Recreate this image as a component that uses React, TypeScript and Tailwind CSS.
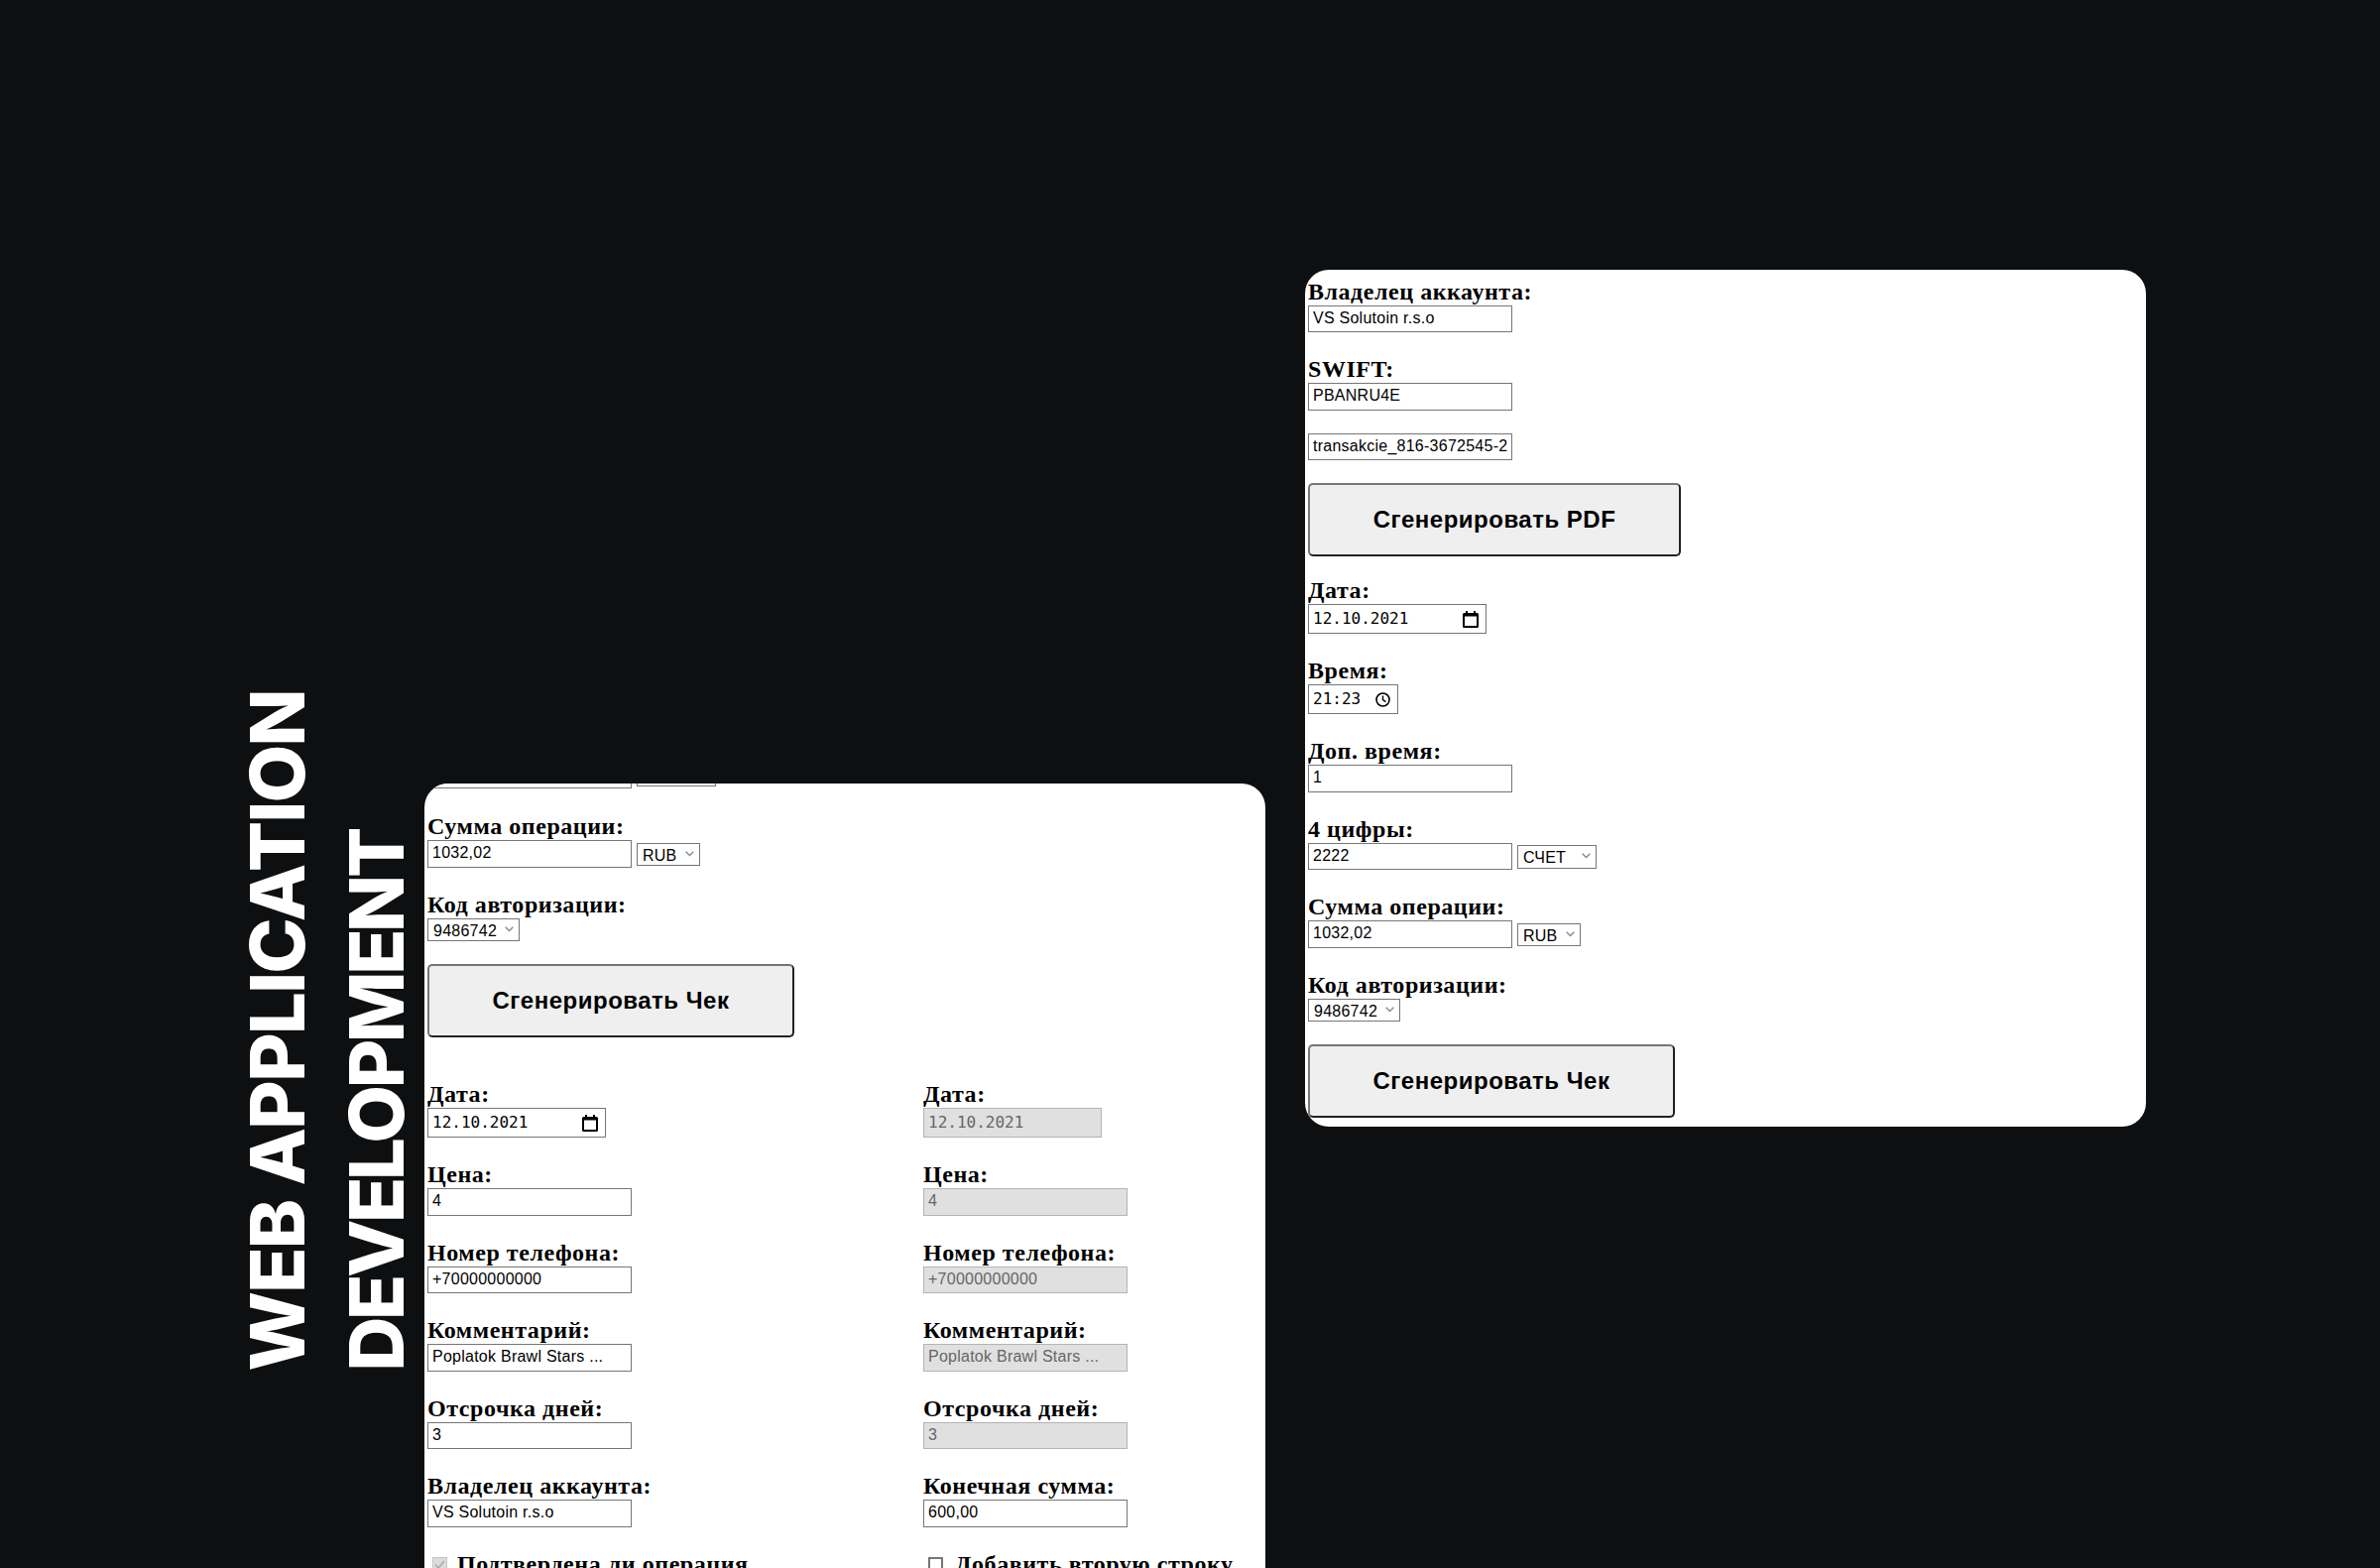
const sans = "font-['Liberation_Sans',sans-serif]";

type FieldProps = {
    label?: string;
    value: string;
    box?: string;
    disabled?: boolean;
    after?: React.ReactNode;
};

function Label({ children }: { children: React.ReactNode }) {
    return <div className="h-[27px] text-[24px] leading-[27px] font-bold tracking-[0.55px] text-black whitespace-nowrap">{children}</div>;
}

function TextBox({ value, box = "h-[27px]", disabled }: { value: string; box?: string; disabled?: boolean }) {
    return (
        <input
            readOnly
            value={value}
            className={`${box} w-[206px] border px-[4px] pb-[2px] text-[16px] tracking-[0.25px] outline-none ${sans} ${
                disabled ? "border-[#b4b4b4] bg-[#e0e0e0] text-[#666]" : "border-[#767676] bg-white text-black"
            }`}
        />
    );
}

function Dropdown({ value, box }: { value: string; box: string }) {
    return (
        <span className={`${box} relative block`}>
            <select
                defaultValue={value}
                className={`size-full appearance-none border border-[#767676] bg-white pb-[3px] pl-[5px] text-[16px] tracking-[0.25px] text-black ${sans}`}
            >
                <option>{value}</option>
            </select>
            <svg width="9" height="6" viewBox="0 0 9 6" className="absolute right-[6px] top-[8px]">
                <path d="M0.7 0.8l3.8 3.8 3.8-3.8" fill="none" stroke="#8a8a8a" strokeWidth="1.4" />
            </svg>
        </span>
    );
}

function CalendarIcon() {
    return (
        <svg width="16" height="17" viewBox="0 0 16 17" className="shrink-0">
            <path
                fillRule="evenodd"
                d="M3 0h2v2h6V0h2v2h1.5A1.5 1.5 0 0 1 16 3.5v12a1.5 1.5 0 0 1-1.5 1.5h-13A1.5 1.5 0 0 1 0 15.5v-12A1.5 1.5 0 0 1 1.5 2H3zM2 5.5V15h12V5.5z"
                fill="#000"
            />
        </svg>
    );
}

function ClockIcon() {
    return (
        <svg width="15" height="15" viewBox="0 0 15 15" className="shrink-0">
            <circle cx="7.5" cy="7.5" r="6.5" fill="none" stroke="#000" strokeWidth="1.6" />
            <path d="M7.5 3.6v4.1l3 1.9" fill="none" stroke="#000" strokeWidth="1.4" />
        </svg>
    );
}

function DateBox({ value, box, disabled, icon }: { value: string; box: string; disabled?: boolean; icon?: React.ReactNode }) {
    return (
        <div
            className={`${box} flex items-center justify-between border pl-[4px] pr-[7px] text-[16px] font-['DejaVu_Sans_Mono',monospace] ${
                disabled ? "border-[#b4b4b4] bg-[#e0e0e0] text-[#666]" : "border-[#767676] bg-white text-black"
            }`}
        >
            <span>{value}</span>
            {icon}
        </div>
    );
}

function GenButton({ text, box }: { text: string; box: string }) {
    return (
        <button
            type="button"
            className={`${box} h-[74px] rounded-[5px] border-2 border-[#767676] border-r-[#222] border-b-[#222] bg-[#efefef] text-[24px] font-bold tracking-[0.5px] text-black ${sans}`}
        >
            {text}
        </button>
    );
}

function Field({ label, value, box, disabled, after }: FieldProps) {
    return (
        <div className="mb-[24px]">
            {label && <Label>{label}</Label>}
            <div className="flex items-center gap-[5px]">
                <TextBox value={value} box={box} disabled={disabled} />
                {after}
            </div>
        </div>
    );
}

function CheckRow({ text, checked, disabled }: { text: string; checked?: boolean; disabled?: boolean }) {
    return (
        <div className="flex items-center pl-[5px]">
            <span
                className={`flex size-[15px] shrink-0 items-center justify-center ${
                    disabled ? "mr-[10px] border border-[#c4c4c4] bg-[#dcdcdc]" : "mr-[12px] border-2 border-[#767676] bg-white"
                }`}
            >
                {checked && (
                    <svg width="13" height="13" viewBox="0 0 13 13">
                        <path d="M2 6.5l3 3.5 6-7" fill="none" stroke="#aaa" strokeWidth="1.6" />
                    </svg>
                )}
            </span>
            <Label>{text}</Label>
        </div>
    );
}

function LeftCard() {
    return (
        <div className="mt-[790px] h-[791px] w-[848px] shrink-0 overflow-hidden rounded-t-[24px] bg-white pl-[3px]">
            <div className="-mt-[22px] mb-[25px] flex items-start gap-[5px]">
                <TextBox value="2222" />
                <div className="mt-px">
                    <Dropdown value="СЧЕТ" box="h-[24px] w-[80px]" />
                </div>
            </div>
            <Field label="Сумма операции:" value="1032,02" box="h-[28px]" after={<Dropdown value="RUB" box="h-[23px] w-[64px]" />} />
            <Label>Код авторизации:</Label>
            <Dropdown value="9486742" box="h-[23px] w-[93px]" />
            <GenButton text="Сгенерировать Чек" box="mt-[23px] block w-[370px]" />

            <div className="mt-[44px] flex">
                <div className="w-[500px] shrink-0">
                    <Label>Дата:</Label>
                    <DateBox value="12.10.2021" box="mb-[24px] h-[30px] w-[180px]" icon={<CalendarIcon />} />
                    <Field label="Цена:" value="4" box="h-[28px]" />
                    <Field label="Номер телефона:" value="+70000000000" />
                    <Field label="Комментарий:" value="Poplatok Brawl Stars ..." box="h-[28px]" />
                    <Field label="Отсрочка дней:" value="3" />
                    <Field label="Владелец аккаунта:" value="VS Solutoin r.s.o" box="h-[28px]" />
                    <CheckRow text="Подтвердена ли операция" checked disabled />
                </div>
                <div>
                    <Label>Дата:</Label>
                    <DateBox value="12.10.2021" box="mb-[24px] h-[30px] w-[180px]" disabled />
                    <Field label="Цена:" value="4" box="h-[28px]" disabled />
                    <Field label="Номер телефона:" value="+70000000000" disabled />
                    <Field label="Комментарий:" value="Poplatok Brawl Stars ..." box="h-[28px]" disabled />
                    <Field label="Отсрочка дней:" value="3" disabled />
                    <Field label="Конечная сумма:" value="600,00" box="h-[28px]" />
                    <CheckRow text="Добавить вторую строку" />
                </div>
            </div>
        </div>
    );
}

function RightCard() {
    return (
        <div className="ml-[40px] mt-[272px] h-[864px] w-[848px] shrink-0 rounded-[24px] bg-white pl-[3px] pt-[9px]">
            <Field label="Владелец аккаунта:" value="VS Solutoin r.s.o" />
            <Field label="SWIFT:" value="PBANRU4E" box="h-[28px]" />
            <div className="-mt-px">
                <TextBox value="transakcie_816-3672545-2" />
            </div>
            <GenButton text="Сгенерировать PDF" box="mt-[23px] mb-[21px] block w-[376px]" />
            <Label>Дата:</Label>
            <DateBox value="12.10.2021" box="mb-[24px] h-[30px] w-[180px]" icon={<CalendarIcon />} />
            <Label>Время:</Label>
            <DateBox value="21:23" box="mb-[24px] h-[30px] w-[91px]" icon={<ClockIcon />} />
            <Field label="Доп. время:" value="1" box="h-[28px]" />
            <Field label="4 цифры:" value="2222" after={<Dropdown value="СЧЕТ" box="h-[24px] w-[80px]" />} />
            <Field label="Сумма операции:" value="1032,02" box="h-[28px]" after={<Dropdown value="RUB" box="h-[23px] w-[64px]" />} />
            <Label>Код авторизации:</Label>
            <Dropdown value="9486742" box="h-[23px] w-[93px]" />
            <GenButton text="Сгенерировать Чек" box="mt-[23px] block w-[370px]" />
        </div>
    );
}

export default function App() {
    return (
        <div className="flex h-[1581px] w-[2400px] overflow-hidden bg-[#0e0f11] font-['Liberation_Serif',serif]">
            <div className="mb-[198px] ml-[229px] w-[199px] shrink-0 self-end [writing-mode:vertical-rl] rotate-180 font-['Inter',sans-serif] text-[76px] leading-[100px] font-extrabold text-white whitespace-nowrap">
                <div className="tracking-[-1.7px]">WEB APPLICATION</div>
                <div className="tracking-[-3.4px]">DEVELOPMENT</div>
            </div>
            <LeftCard />
            <RightCard />
        </div>
    );
}
